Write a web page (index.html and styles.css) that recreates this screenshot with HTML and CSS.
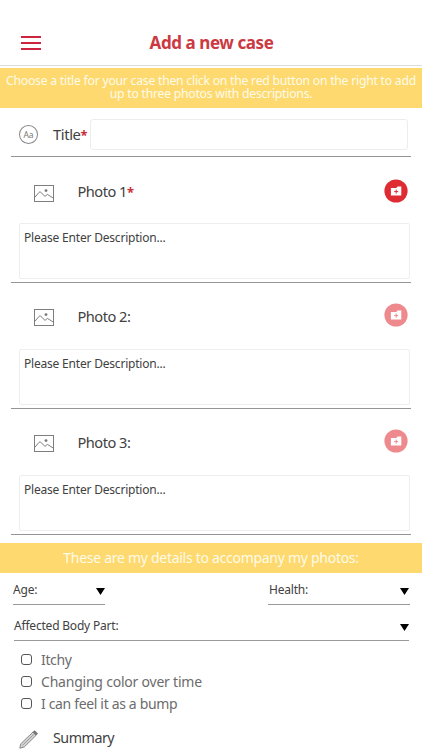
FILE: index.html
```html
<!DOCTYPE html>
<html lang="en">
<head>
<meta charset="utf-8">
<title>Add a new case</title>
<link rel="stylesheet" href="styles.css">
</head>
<body>
<svg class="defs" width="0" height="0">
  <symbol id="picture" viewBox="0 0 20 17">
    <rect x=".5" y=".5" width="19" height="16"/>
    <path d="M.8 12.4 5 7.4Q5.8 6.4 6.8 7.3L11 11.4 13.4 9.4 19.2 13"/>
    <circle cx="12" cy="5.6" r="1.4" class="dot"/>
  </symbol>
  <symbol id="folder" viewBox="0 0 24 24">
    <circle cx="12" cy="12" r="11.6"/>
    <path class="sheet" d="M6.9 9h5.4l1.2-1.5h3.8v9.1H6.9z"/>
    <path class="plus" d="M12.2 10.6v4M10.2 12.6h4"/>
  </symbol>
</svg>
<main class="screen">
  <header class="header">
    <div class="menu"><i></i><i></i><i></i></div>
    <h1>Add a new case</h1>
  </header>
  <p class="banner intro">Choose a title for your case then click on the red button on the right to add up to three photos with descriptions.</p>
  <section class="title-row">
    <div class="aa">Aa</div>
    <label>Title<b>*</b></label>
    <div class="input"></div>
  </section>
  <section class="photo first">
    <div class="photo-head"><svg class="pic"><use href="#picture"/></svg><span class="name">Photo 1<b>*</b></span><svg class="add"><use href="#folder"/></svg></div>
    <div class="desc">Please Enter Description...</div>
  </section>
  <section class="photo">
    <div class="photo-head"><svg class="pic"><use href="#picture"/></svg><span class="name">Photo 2:</span><svg class="add off"><use href="#folder"/></svg></div>
    <div class="desc">Please Enter Description...</div>
  </section>
  <section class="photo">
    <div class="photo-head"><svg class="pic"><use href="#picture"/></svg><span class="name">Photo 3:</span><svg class="add off"><use href="#folder"/></svg></div>
    <div class="desc">Please Enter Description...</div>
  </section>
  <p class="banner details">These are my details to accompany my photos:</p>
  <div class="selects">
    <div class="select age"><span>Age:</span><i></i></div>
    <div class="select health"><span>Health:</span><i></i></div>
  </div>
  <div class="select part"><span>Affected Body Part:</span><i></i></div>
  <ul class="checks">
    <li><i></i><span class="tight">Itchy</span></li>
    <li><i></i><span>Changing color over time</span></li>
    <li><i></i><span class="tight">I can feel it as a bump</span></li>
  </ul>
  <div class="summary">
    <svg class="pencil" viewBox="0 0 20 20"><path class="body" d="M.8 19.2 1.8 14.8 14.2 2.8 17.4 6 5.2 18z"/><path class="core" d="M3.4 16.4 15.8 4.4"/><path class="cap" d="M13.6 3.2 15.6 1.2 19 4.6 17 6.6z"/></svg>
    <span>Summary</span>
  </div>
</main>
</body>
</html>
```
FILE: styles.css
```css
* { box-sizing: border-box; }
body { margin: 0; background: #fff; color: #414141; font-family: "Noto Sans", "Open Sans", sans-serif; }
h1, p, ul { margin: 0; padding: 0; }
ul { list-style: none; }
span, label { white-space: nowrap; }
.defs { display: block; height: 0; }
.screen { width: 422px; height: 750px; overflow: hidden; }

.header { height: 66px; padding: 20px 20px 0 21px; border-bottom: 1px solid #dcdcdc; display: grid; grid-template-columns: 20px 1fr 20px; align-items: center; }
.menu { display: flex; flex-direction: column; gap: 4px; }
.menu i { height: 2px; background: #cf2440; }
h1 { padding-top: 1px; text-align: center; font-size: 17px; line-height: 24px; font-weight: 700; color: #cb3a42; letter-spacing: -.42px; }

.banner { background: #fdd96f; color: #fffbe9; text-align: center; }
.intro { margin-top: 2px; height: 40px; padding: 6px 4px 0; font-size: 12.2px; line-height: 13px; letter-spacing: -.23px; }
.details { margin-top: 8px; height: 30px; font-size: 14px; line-height: 29px; letter-spacing: -.28px; }

.title-row { height: 49px; margin: 0 11px; padding: 4px 3px 0 8px; border-bottom: 1px solid #949494; display: flex; align-items: center; }
.aa { width: 19px; height: 19px; border: 1px solid #858585; border-radius: 50%; font-size: 8.5px; line-height: 17px; text-align: center; color: #777; }
.title-row label { margin-left: 15px; width: 37px; font-size: 14.8px; line-height: 20px; letter-spacing: -.4px; }
b { color: #c92e38; font-weight: 700; font-size: 13px; }
.input { width: 319px; height: 31px; border: 1px solid #ededed; border-radius: 3px; }

.photo { height: 126px; margin: 0 11px; padding-top: 19px; border-bottom: 1px solid #949494; }
.photo.first { padding-top: 21px; }
.photo-head { height: 27px; padding: 0 3px 0 23px; display: flex; align-items: center; }
.pic { width: 20px; height: 17px; margin-top: 3px; fill: none; stroke: #7e7e7e; stroke-width: 1; }
.dot { fill: #777; stroke: none; }
.name { margin: 0 auto 0 23.5px; font-size: 14.6px; line-height: 20px; letter-spacing: -.5px; }
.add { width: 24px; height: 24px; margin-bottom: 2px; color: #df2b32; fill: currentColor; }
.add.off { color: #ee8a8d; }
.sheet { fill: #fff; }
.plus { stroke: currentColor; stroke-width: 1; fill: none; }
.desc { width: 391px; height: 56px; margin: 20px 0 0 8px; padding: 5px 4px; border: 1px solid #eee; border-radius: 2px; font-size: 12px; line-height: 18px; letter-spacing: -.2px; white-space: nowrap; }
.first .desc { margin-top: 18px; }

.selects { display: flex; justify-content: space-between; padding: 0 12px 0 13px; }
.select { display: flex; justify-content: space-between; border-bottom: 1px solid #999; font-size: 12px; line-height: 18px; letter-spacing: -.2px; }
.select i { width: 9px; height: 7px; margin-top: 7px; background: #000; clip-path: polygon(0 0, 100% 0, 50% 100%); }
.age { width: 92px; height: 32px; padding-top: 8px; }
.health { width: 142px; height: 32px; padding: 8px 1px 0; }
.part { height: 36px; margin: 0 13px 0 14px; padding-top: 12px; }

.checks { padding: 7px 0 0 21px; color: #6c6c6c; font-size: 14px; letter-spacing: -.22px; }
.checks li { height: 22.4px; display: flex; align-items: center; }
.checks i { width: 11px; height: 11px; margin-right: 9px; border: 1px solid #555; border-radius: 3px; }
.checks .tight { letter-spacing: -.34px; }
.summary { display: flex; align-items: center; height: 24px; margin-top: 10px; padding-left: 19px; font-size: 14.3px; letter-spacing: -.5px; }
.pencil { width: 20px; height: 20px; margin: 3px 14px 0 0; }
.body { fill: #d4d4d4; stroke: #8a8a8a; stroke-width: 1; }
.core { fill: none; stroke: #9a9a9a; stroke-width: 1; }
.cap { fill: #777; }
```
